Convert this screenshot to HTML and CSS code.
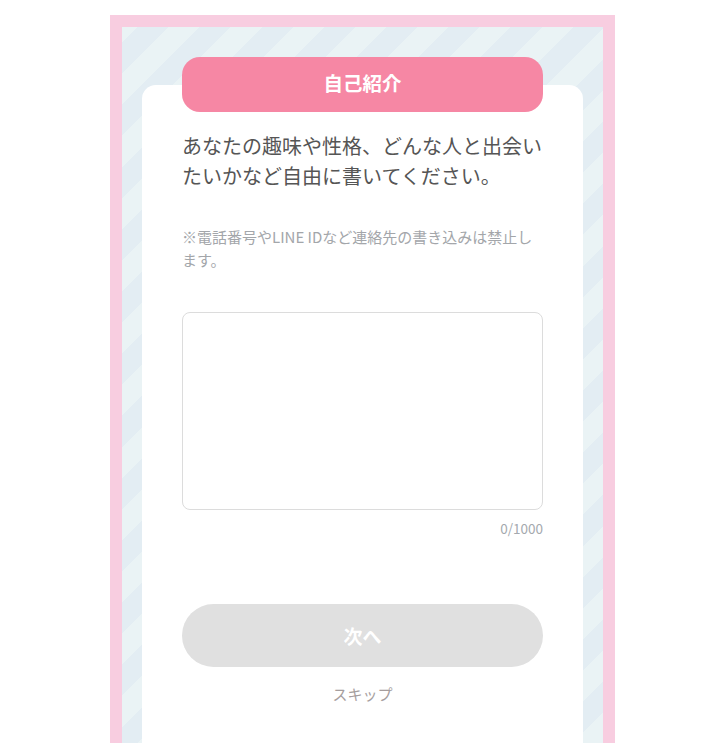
FILE: index.html
```html
<!DOCTYPE html>
<html lang="ja">
<head>
<meta charset="utf-8">
<title>自己紹介</title>
<link rel="stylesheet" href="styles.css">
</head>
<body>
<div class="frame">
  <div class="inner">
    <div class="head">自己紹介</div>
    <div class="card">
      <p class="lead">あなたの趣味や性格、どんな人と出会いたいかなど自由に書いてください。</p>
      <p class="note">※電話番号やLINE IDなど連絡先の書き込みは禁止します。</p>
      <textarea class="box" maxlength="1000"></textarea>
      <div class="count">0/1000</div>
      <button class="next" type="button">次へ</button>
      <div class="skip">スキップ</div>
    </div>
  </div>
</div>
</body>
</html>
```
FILE: styles.css
```css
* { box-sizing: border-box; }
html, body { margin: 0; padding: 0; background: #fff; }
body {
  font-family: "Noto Sans CJK JP", "Noto Sans", sans-serif;
  padding-top: 15px;
  height: 743px;
  overflow: hidden;
}
.frame {
  width: 505px;
  margin-left: 110px;
  border: 12px solid #f8cde0;
  border-bottom: none;
  background: repeating-linear-gradient(-45deg, #e3edf3 0 22px, #eaf3f5 22px 44px);
  min-height: 760px;
}
.inner {
  padding: 30px 20px 0;
}
.head {
  position: relative;
  z-index: 1;
  margin: 0 40px;
  height: 55px;
  padding-bottom: 5px;
  border-radius: 18px;
  background: #f687a4;
  color: #fff;
  font-weight: 700;
  font-size: 19.5px;
  display: flex;
  align-items: center;
  justify-content: center;
}
.card {
  margin-top: -27px;
  background: #fff;
  border-radius: 14px 14px 0 0;
  padding: 46px 40px 60px;
  display: flex;
  flex-direction: column;
  min-height: 680px;
}
.lead {
  margin: 0;
  font-size: 20px;
  line-height: 30px;
  color: #555;
}
.note {
  margin: 35px 0 0;
  font-size: 15px;
  line-height: 22.5px;
  color: #a3a6aa;
}
.box {
  display: block;
  margin-top: 41px;
  width: 100%;
  height: 198px;
  border: 1px solid #dcdcdc;
  border-radius: 8px;
  resize: none;
  font: inherit;
  background: #fff;
}
.count {
  margin-top: 8px;
  text-align: right;
  font-size: 13.5px;
  line-height: 20px;
  color: #a4a9ae;
}
.next {
  margin-top: 66px;
  height: 63px;
  width: 100%;
  border: none;
  border-radius: 32px;
  background: #e0e0e0;
  color: #fff;
  font-family: inherit;
  font-weight: 700;
  font-size: 19px;
}
.skip {
  margin-top: 16px;
  text-align: center;
  font-size: 15px;
  line-height: 22px;
  color: #a69e9e;
}
```
